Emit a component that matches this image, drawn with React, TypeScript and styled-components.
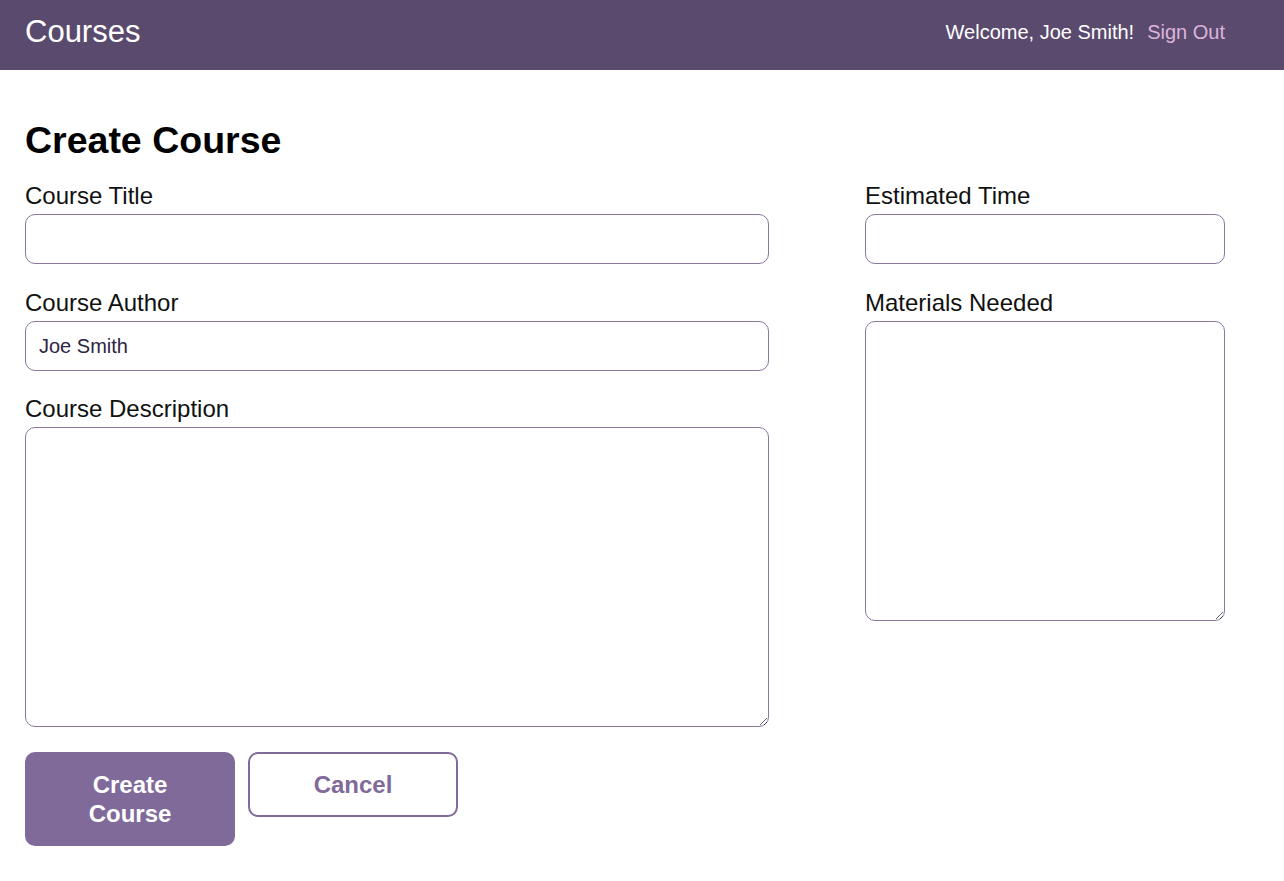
import styled, { createGlobalStyle } from "styled-components";

const GlobalStyle = createGlobalStyle`
  * {
    box-sizing: border-box;
  }

  body {
    margin: 0;
    background: #ffffff;
    font-family: "Liberation Sans", Arial, sans-serif;
    color: #000000;
  }
`;

const App = () => {
  return (
    <>
      <GlobalStyle />
      <Header>
        <HeaderInner>
          <Logo>Courses</Logo>
          <Nav>
            <Welcome>Welcome, Joe Smith!</Welcome>
            <SignOut href="#">Sign Out</SignOut>
          </Nav>
        </HeaderInner>
      </Header>

      <Main>
        <Title>Create Course</Title>
        <Form onSubmit={(e) => e.preventDefault()}>
          <Columns>
            <Column>
              <Field>
                <Label htmlFor="courseTitle">Course Title</Label>
                <Input id="courseTitle" type="text" />
              </Field>
              <Field>
                <Label htmlFor="courseAuthor">Course Author</Label>
                <Input id="courseAuthor" type="text" defaultValue="Joe Smith" />
              </Field>
              <Field $tight>
                <Label htmlFor="courseDescription">Course Description</Label>
                <TextArea id="courseDescription" />
              </Field>
            </Column>
            <Column $narrow>
              <Field>
                <Label htmlFor="estimatedTime">Estimated Time</Label>
                <Input id="estimatedTime" type="text" />
              </Field>
              <Field>
                <Label htmlFor="materialsNeeded">Materials Needed</Label>
                <TextArea id="materialsNeeded" />
              </Field>
            </Column>
          </Columns>
          <Actions>
            <Button type="submit" $primary>
              Create Course
            </Button>
            <Button type="button">Cancel</Button>
          </Actions>
        </Form>
      </Main>
    </>
  );
};

export default App;

const purple = "#7f6a9a";
const border = "#8a789f";

const Header = styled.header`
  height: 70px;
  background-color: #594a6e;
`;

const HeaderInner = styled.div`
  width: 1225px;
  height: 100%;
  padding-left: 25px;
  display: flex;
  align-items: center;
  justify-content: space-between;
`;

const Logo = styled.h1`
  margin: 0 0 6px;
  font-size: 31px;
  font-weight: 400;
  color: #ffffff;
`;

const Nav = styled.nav`
  display: flex;
  gap: 13px;
  font-size: 20px;
  margin-bottom: 6px;
`;

const Welcome = styled.span`
  color: #ffffff;
`;

const SignOut = styled.a`
  color: #ddb4da;
  text-decoration: none;
`;

const Main = styled.main`
  padding: 48px 25px 40px;
  width: 1250px;
`;

const Title = styled.h2`
  margin: 0 0 18px;
  font-size: 37.5px;
  line-height: 44px;
  font-weight: 700;
`;

const Form = styled.form`
  display: flex;
  flex-direction: column;
`;

const Columns = styled.div`
  display: flex;
  gap: 96px;
`;

const Column = styled.div<{ $narrow?: boolean }>`
  width: ${({ $narrow }) => ($narrow ? "360px" : "744px")};
  display: flex;
  flex-direction: column;
  gap: 23px;
`;

const Field = styled.div<{ $tight?: boolean }>`
  display: flex;
  flex-direction: column;
  gap: 4px;
  margin-top: ${({ $tight }) => ($tight ? "-1px" : "0")};
`;

const Label = styled.label`
  padding-top: 2px;
  font-size: 24px;
  line-height: 28px;
  font-weight: 400;
  color: #111111;
`;

const Input = styled.input`
  display: block;
  width: 100%;
  height: 50px;
  padding: 0 13px;
  border: 1px solid ${border};
  border-radius: 10px;
  outline: none;
  font-family: inherit;
  font-size: 20px;
  color: #2e2440;
  background: #ffffff;
`;

const TextArea = styled.textarea`
  display: block;
  width: 100%;
  height: 300px;
  padding: 13px;
  border: 1px solid ${border};
  border-radius: 10px;
  outline: none;
  font-family: inherit;
  font-size: 20px;
  background: #ffffff;
`;

const Actions = styled.div`
  display: flex;
  align-items: flex-start;
  gap: 13px;
  margin-top: 25px;
`;

const Button = styled.button<{ $primary?: boolean }>`
  width: 210px;
  padding: 16px 30px;
  border: 2px solid ${purple};
  border-radius: 10px;
  font-family: inherit;
  font-size: 24px;
  line-height: 29px;
  font-weight: 700;
  cursor: pointer;
  background-color: ${({ $primary }) => ($primary ? purple : "#ffffff")};
  color: ${({ $primary }) => ($primary ? "#ffffff" : purple)};
`;
